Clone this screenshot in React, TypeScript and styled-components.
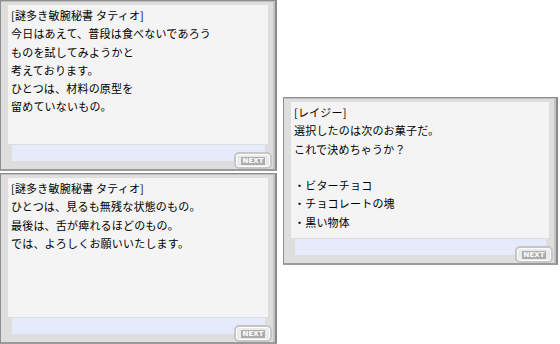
import React from "react";
import styled, { createGlobalStyle } from "styled-components";

const GlobalStyle = createGlobalStyle`
  html, body {
    margin: 0;
    padding: 0;
    background: #ffffff;
  }
  body {
    font-family: "Noto Sans CJK JP", "Noto Sans", sans-serif;
  }
`;

const Page = styled.div`
  display: flex;
  width: 560px;
  height: 344px;
  overflow: hidden;
`;

const Column = styled.div<{ $top?: number; $left?: number }>`
  display: flex;
  flex-direction: column;
  gap: 2px;
  padding-top: ${(p) => p.$top ?? 0}px;
  margin-left: ${(p) => p.$left ?? 0}px;
`;

const Frame = styled.div<{ $w: number; $h: number }>`
  position: relative;
  box-sizing: border-box;
  width: ${(p) => p.$w}px;
  height: ${(p) => p.$h}px;
  background: #dedede;
  border: 1px solid #8e8e8e;
  border-right: 2px solid #8a8a8a;
  border-bottom: 2px solid #9a9a9a;
  box-shadow: inset -2px 0 0 #c4c4c4, inset 0 1px 0 #bdbdbd;
  padding: 4px 7px 0 7px;
  display: flex;
  flex-direction: column;
`;

const Body = styled.div`
  flex: 1;
  background: #f4f4f4;
  padding: 1px 3px 0 3px;
  font-size: 11px;
  line-height: 18.3px;
  color: #000;
  white-space: pre;
  letter-spacing: 0.2px;
`;

const Strip = styled.div`
  height: 16px;
  margin: 1px 3px 8px 4px;
  background: #e6eafa;
`;

const Next = styled.div`
  position: absolute;
  right: 3px;
  bottom: 0px;
  box-sizing: border-box;
  width: 38px;
  height: 17px;
  border: 2px solid #c6c6c6;
  border-radius: 5px;
  background: #ebebeb;
  box-shadow: inset 0 0 0 1px #ffffff;
  display: flex;
  align-items: center;
  justify-content: center;
`;

const NextLabel = styled.span`
  background: #acacac;
  color: #ffffff;
  font-family: "DejaVu Sans", sans-serif;
  font-weight: bold;
  font-size: 7px;
  line-height: 8px;
  padding: 0 2px;
`;

type DialogProps = { lines: string[]; w?: number; h?: number };

function Dialog({ lines, w = 277, h = 171 }: DialogProps) {
  return (
    <Frame $w={w} $h={h}>
      <Body>{lines.join("\n")}</Body>
      <Strip />
      <Next>
        <NextLabel>NEXT</NextLabel>
      </Next>
    </Frame>
  );
}

export default function App() {
  return (
    <Page>
      <GlobalStyle />
      <Column>
        <Dialog
          lines={[
            "[謎多き敏腕秘書 タティオ]",
            "今日はあえて、普段は食べないであろう",
            "ものを試してみようかと",
            "考えております。",
            "ひとつは、材料の原型を",
            "留めていないもの。",
          ]}
        />
        <Dialog
          lines={[
            "[謎多き敏腕秘書 タティオ]",
            "ひとつは、見るも無残な状態のもの。",
            "最後は、舌が痺れるほどのもの。",
            "では、よろしくお願いいたします。",
          ]}
        />
      </Column>
      <Column $top={97} $left={6}>
        <Dialog
          w={275}
          h={168}
          lines={[
            "[レイジー]",
            "選択したのは次のお菓子だ。",
            "これで決めちゃうか？",
            "",
            "・ビターチョコ",
            "・チョコレートの塊",
            "・黒い物体",
          ]}
        />
      </Column>
    </Page>
  );
}
